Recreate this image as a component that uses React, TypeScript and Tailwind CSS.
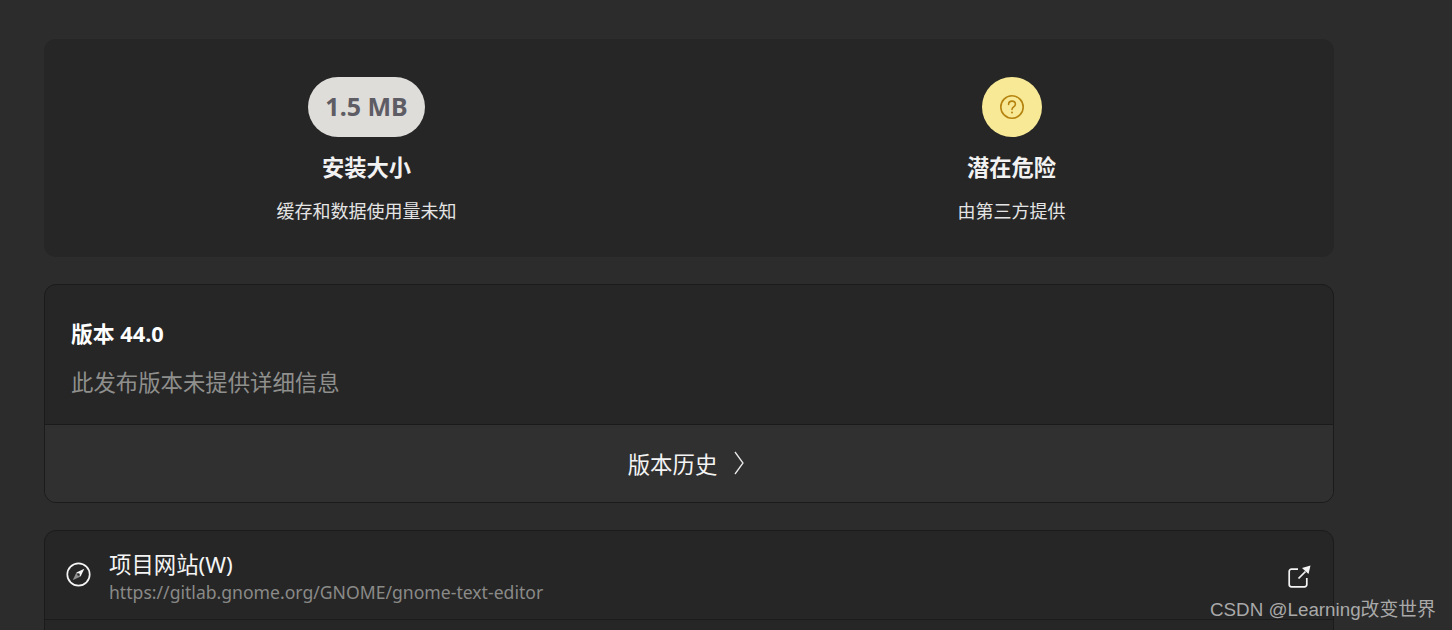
const cjk = "font-['Noto_Sans','Noto_Sans_CJK_SC',sans-serif]";

function Tile({ badge, title, sub }: { badge: React.ReactNode; title: string; sub: string }) {
  return (
    <div className="flex flex-1 flex-col items-center">
      {badge}
      <div className="mt-[14px] h-[34px] text-[22.3px] leading-[34px] font-bold text-[#f2f2f2]">{title}</div>
      <div className="mt-[14px] h-[24px] text-[18px] leading-[24px] text-[#e4e4e4]">{sub}</div>
    </div>
  );
}

export default function App() {
  return (
    <div className={`relative h-[630px] w-[1452px] overflow-hidden bg-[#2c2c2c] pt-[39px] pl-[44px] ${cjk}`}>
      <div className="flex h-[218px] w-[1290px] rounded-[12px] bg-[#262626] pt-[38px]">
        <Tile
          badge={
            <div className="flex h-[60px] w-[117px] items-center justify-center rounded-full bg-[#deddda] text-[25px] font-bold text-[#5e5c64]">
              1.5 MB
            </div>
          }
          title="安装大小"
          sub="缓存和数据使用量未知"
        />
        <Tile
          badge={
            <div className="flex h-[60px] w-[60px] items-center justify-center rounded-full bg-[#f8e996]">
              <svg width="26" height="26" viewBox="0 0 26 26" fill="none" stroke="#b5830f" strokeWidth="1.6">
                <circle cx="13" cy="13" r="11.2" />
                <path d="M9.6 10.4c0-2 1.5-3.3 3.4-3.3s3.4 1.3 3.4 3.1c0 2.6-3.4 2.7-3.4 5.2" strokeLinecap="round" />
                <circle cx="13" cy="18.6" r="1" fill="#b5830f" stroke="none" />
              </svg>
            </div>
          }
          title="潜在危险"
          sub="由第三方提供"
        />
      </div>

      <div className="mt-[27px] h-[219px] w-[1290px] overflow-hidden rounded-[12px] border border-[#1b1b1b] bg-[#262626]">
        <div className="h-[140px] border-b border-[#1b1b1b] pt-[33px] pl-[26px]">
          <div className="h-[32px] text-[21.8px] leading-[32px] font-bold text-white">版本 44.0</div>
          <div className="mt-[17px] h-[32px] text-[22.4px] leading-[32px] text-[#8f8f8d]">此发布版本未提供详细信息</div>
        </div>
        <div className="flex h-[77px] items-center justify-center bg-[#303030] pt-[2px] pr-[5px] text-[22.4px] text-[#f4f4f4]">
          <span>版本历史</span>
          <svg className="ml-[16px] mb-[3px]" width="12" height="24" viewBox="0 0 12 24" fill="none" stroke="#e8e8e8" strokeWidth="1.3">
            <path d="M2 1l8 11-8 11" />
          </svg>
        </div>
      </div>

      <div className="mt-[27px] h-[140px] w-[1290px] overflow-hidden rounded-[12px] border border-[#1b1b1b] bg-[#262626]">
        <div className="flex h-[89px] items-center border-b border-[#1b1b1b] pr-[22px] pl-[21px]">
          <svg width="25" height="25" viewBox="0 0 25 25" fill="none" className="mt-[-1px]">
            <circle cx="12.5" cy="12.5" r="11.2" stroke="#f4f4f4" strokeWidth="1.7" />
            <path d="M18.3 6.7l-7.9 3.7 4.2 4.2z" fill="#f4f4f4" />
            <path d="M6.7 18.3l3.7-7.9 4.2 4.2z" fill="#8f8f8f" />
            <circle cx="12.5" cy="12.5" r="1.2" fill="#262626" />
          </svg>
          <div className="ml-[18px] flex-1 pt-[5px]">
            <div className="h-[28px] text-[22.4px] leading-[28px] text-[#f4f4f4]">项目网站(W)</div>
            <div className="mt-[1px] h-[24px] text-[17.6px] leading-[24px] text-[#8a8a88]">
              https://gitlab.gnome.org/GNOME/gnome-text-editor
            </div>
          </div>
          <svg width="24" height="24" viewBox="0 0 24 24" fill="none" className="mt-[4px]">
            <path d="M11 4.2H4.5a2.3 2.3 0 0 0-2.3 2.3v13a2.3 2.3 0 0 0 2.3 2.3h13a2.3 2.3 0 0 0 2.3-2.3V13" stroke="#f4f4f4" strokeWidth="1.7" />
            <path d="M11.500 13.500L18.500 6.500" stroke="#f4f4f4" strokeWidth="1.7" />
            <path d="M15 3L23.500 0.500l-2 8.500z" fill="#f4f4f4" />
          </svg>
        </div>
      </div>

      <div className="absolute top-[597px] left-[1210px] text-[18.8px] leading-[25px] whitespace-nowrap text-[#a9a9a9] font-['Liberation_Sans','Noto_Sans_CJK_SC',sans-serif]">
        CSDN @Learning改变世界
      </div>
    </div>
  );
}
